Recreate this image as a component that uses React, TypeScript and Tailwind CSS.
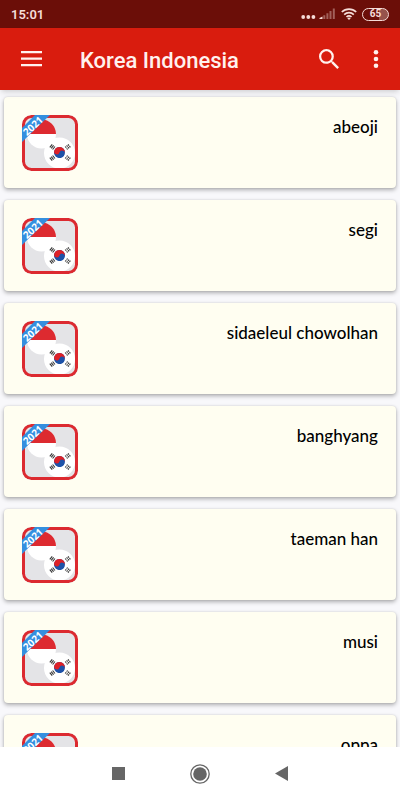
const words = [
  "abeoji",
  "segi",
  "sidaeleul chowolhan",
  "banghyang",
  "taeman han",
  "musi",
  "oppa",
];

function AppBadge() {
  return (
    <svg viewBox="0 0 56 56" className="size-14 shrink-0" role="img" aria-label="2021">
      <clipPath id="badge">
        <rect x="0" y="0" width="56" height="56" rx="9" />
      </clipPath>
      <g clipPath="url(#badge)">
        <rect width="56" height="56" fill="#e4e4e7" />
        <circle cx="19.5" cy="19" r="14.5" fill="#fff" />
        <path d="M5 19a14.5 14.5 0 0 1 29 0z" fill="#dd2a30" />
        <circle cx="37.5" cy="38" r="15.5" fill="#fff" />
        <g transform="rotate(18 37.5 37.5)">
          <circle cx="37.5" cy="37.5" r="5.5" fill="#1d52a8" />
          <path
            d="M32 37.5A5.5 5.5 0 0 1 43 37.5A2.75 2.75 0 0 0 37.5 37.5A2.75 2.75 0 0 1 32 37.5z"
            fill="#dd2128"
          />
        </g>
        <g stroke="#3a3a3a" strokeWidth="1.1">
          <path d="M27.8 32.3l2.4-3M29.2 33.4l2.4-3M30.6 34.5l2.4-3" />
          <path d="M43.2 31.5l2.4 3M44.6 30.4l2.4 3M46 29.3l2.4 3" strokeDasharray="1.6 .7" />
          <path d="M27.8 42.7l2.4 3M29.2 41.6l2.4 3M30.6 40.5l2.4 3" />
          <path d="M43.2 43.5l2.4-3M44.6 44.6l2.4-3M46 45.7l2.4-3" strokeDasharray="1.6 .7" />
        </g>
        <rect x="1.5" y="1.5" width="53" height="53" rx="8" fill="none" stroke="#dc2a30" strokeWidth="3" />
        <path d="M0 13L13 0H28L0 27z" fill="#348fdf" />
      </g>
      <text
        x="11"
        y="14.5"
        transform="rotate(-43 11 11)"
        textAnchor="middle"
        fill="#fff"
        className="font-['Open_Sans',sans-serif] text-[10px] font-bold"
      >
        2021
      </text>
    </svg>
  );
}

function StatusBar() {
  return (
    <div className="flex h-7 shrink-0 items-center justify-between bg-[#6b0e08] px-[11px] text-[#f5dcd8]">
      <span className="pt-px text-[13px] font-semibold">15:01</span>
      <div className="flex items-center gap-[5px]">
        <svg viewBox="0 0 35 14" className="h-3.5 w-[35px]" fill="currentColor" aria-hidden="true">
          <circle cx="2.2" cy="10" r="1.9" />
          <circle cx="7.3" cy="10" r="1.9" />
          <circle cx="12.4" cy="10" r="1.9" />
          <path d="M18.5 12v-1l3-1.5V12z" />
          <path d="M22.3 8.3h2V12h-2zM25.4 6.3h2V12h-2zM28.5 4h2v8h-2zM31.8 1.5h2V12h-2z" opacity=".4" />
        </svg>
        <svg viewBox="0 0 16 14" className="h-3.5 w-4" fill="none" stroke="currentColor" strokeWidth="1.7" aria-hidden="true">
          <path d="M.8 5a10.3 10.3 0 0 1 14.4 0M3.2 7.6a7 7 0 0 1 9.6 0M5.5 10a3.6 3.6 0 0 1 5 0" />
          <path d="M6.3 11.3a2.5 2.5 0 0 1 3.4 0L8 13z" fill="currentColor" stroke="none" />
        </svg>
        <span className="flex h-[13px] w-[27px] items-center justify-center rounded-full border border-[#f5dcd8] bg-linear-to-r from-[#6b0e08] from-65% to-[#96534c] to-65% text-[10px] font-bold leading-none">
          65
        </span>
      </div>
    </div>
  );
}

function Toolbar() {
  return (
    <header className="relative z-10 flex h-[62px] shrink-0 items-center bg-[#d91c0e] pl-[21px] pr-[15px] text-[#fff1ee] shadow-md">
      <button type="button" aria-label="Menu">
        <svg viewBox="0 0 21 16" className="h-4 w-[21px]" fill="currentColor">
          <path d="M0 0h21v2.3H0zM0 6.500h21v2.3H0zM0 13h21v2.3H0z" />
        </svg>
      </button>
      <h1 className="ml-[38px] flex-1 pt-[2px] text-[22px] font-medium">Korea Indonesia</h1>
      <button type="button" aria-label="Search">
        <svg viewBox="3 3 17.5 17.5" className="size-5" fill="currentColor">
          <path d="M15.5 14h-.79l-.28-.27A6.47 6.47 0 0 0 16 9.5 6.5 6.5 0 1 0 9.5 16c1.61 0 3.09-.59 4.23-1.57l.27.28v.79l5 4.99L20.49 19l-4.99-5zm-6 0C7.01 14 5 11.99 5 9.5S7.01 5 9.5 5 14 7.01 14 9.5 11.99 14 9.5 14z" />
        </svg>
      </button>
      <button type="button" aria-label="More options" className="ml-7">
        <svg viewBox="0 0 18 18" className="size-[18px]" fill="currentColor">
          <circle cx="9" cy="2.3" r="2.3" />
          <circle cx="9" cy="9" r="2.3" />
          <circle cx="9" cy="15.7" r="2.3" />
        </svg>
      </button>
    </header>
  );
}

function WordCard({ word }: { word: string }) {
  return (
    <li className="flex h-[91px] shrink-0 items-center justify-between rounded bg-[#fffef1] px-[18px] shadow-[0_2px_4px_rgba(0,0,0,0.3),0_0_2px_rgba(0,0,0,0.12)]">
      <AppBadge />
      <span className="self-start pt-[18px] font-['Lato',sans-serif] text-[17px] font-medium leading-6 text-black">
        {word}
      </span>
    </li>
  );
}

function NavigationBar() {
  return (
    <nav className="relative z-10 flex h-[53px] shrink-0 items-center justify-center gap-[65px] bg-white text-[#666]">
      <button type="button" aria-label="Recent apps">
        <svg viewBox="0 0 13 13" className="size-[13px]" fill="currentColor">
          <path d="M0 0h13v13H0z" />
        </svg>
      </button>
      <button type="button" aria-label="Home">
        <svg viewBox="0 0 20 20" className="size-5">
          <circle cx="10" cy="10" r="9.2" fill="none" stroke="currentColor" strokeWidth="1.3" />
          <circle cx="10" cy="10" r="6.8" fill="currentColor" />
        </svg>
      </button>
      <button type="button" aria-label="Back">
        <svg viewBox="0 0 13 15" className="h-[15px] w-[13px]" fill="currentColor">
          <path d="M13 0v15L0 7.5z" />
        </svg>
      </button>
    </nav>
  );
}

export default function App() {
  return (
    <div className="flex h-screen flex-col bg-[#f8f8fb] font-['Roboto',sans-serif]">
      <StatusBar />
      <Toolbar />
      <ul className="flex min-h-0 flex-1 flex-col gap-3 overflow-hidden px-1 pt-[7px]">
        {words.map((word) => (
          <WordCard key={word} word={word} />
        ))}
      </ul>
      <NavigationBar />
    </div>
  );
}
